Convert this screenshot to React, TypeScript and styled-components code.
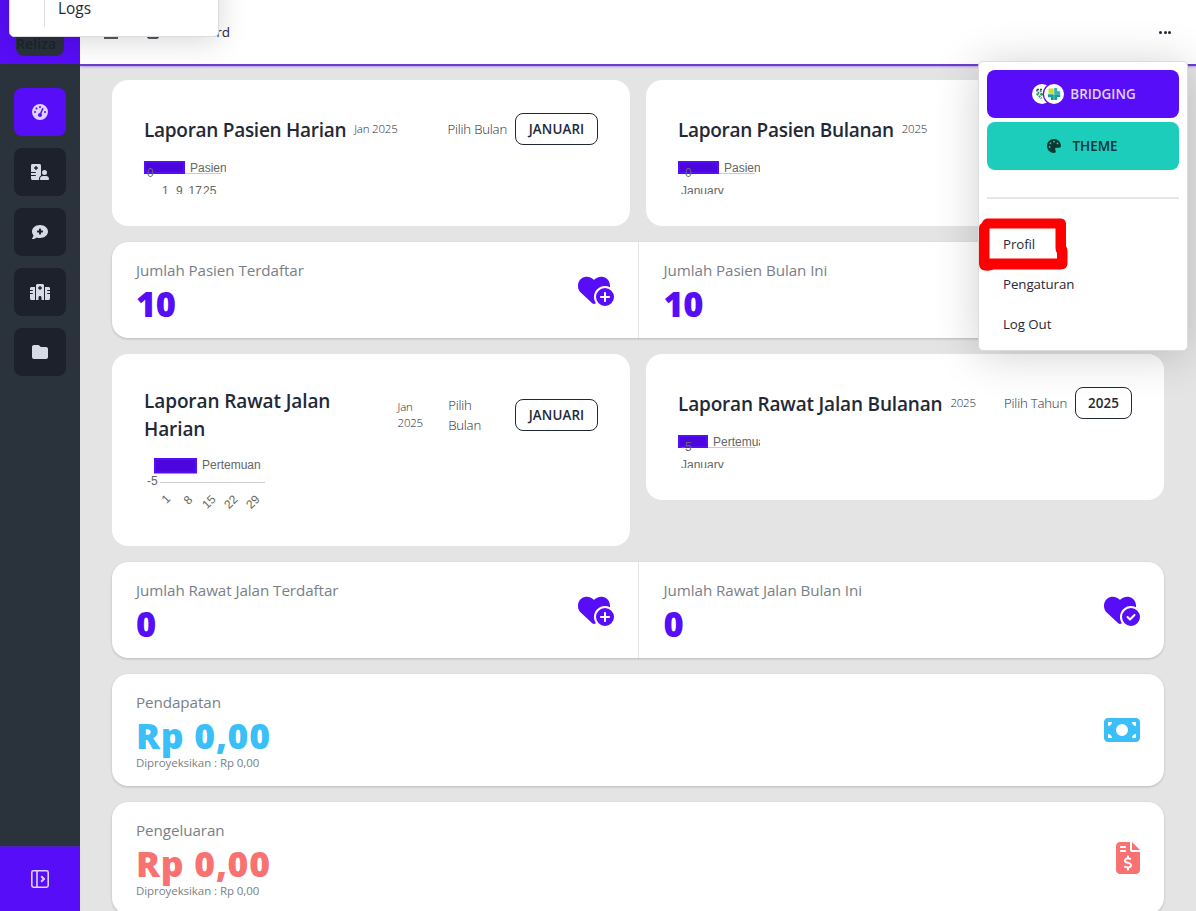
import React from "react";
import styled, { createGlobalStyle } from "styled-components";
import {
  FaGaugeHigh,
  FaHospitalUser,
  FaCommentMedical,
  FaHospital,
  FaFolder,
  FaHeartCirclePlus,
  FaHeartCircleCheck,
  FaMoneyBill,
  FaFileInvoiceDollar,
  FaPalette,
} from "react-icons/fa6";

const C = {
  primary: "#570df8",
  primaryText: "#e0d2fe",
  accent: "#1dcdbc",
  dark: "#2a323c",
  darker: "#1d212b",
  ink: "#1f2937",
  muted: "#797f87",
  info: "#3abff8",
  error: "#f87272",
  page: "#e4e4e4",
};

const Global = createGlobalStyle`
  * { box-sizing: border-box; }
  body { margin: 0; font-family: "Open Sans", "Noto Sans", sans-serif; color: ${C.ink}; background: ${C.page}; }
  button { font-family: inherit; cursor: pointer; }
`;

const Shell = styled.div`
  display: flex;
  position: relative;
  height: 911px;
  overflow: hidden;
`;

const Sidebar = styled.aside`
  width: 80px;
  flex: none;
  display: flex;
  flex-direction: column;
  background: ${C.dark};
`;

const Brand = styled.div`
  height: 64px;
  background: ${C.primary};
  padding: 8px 16px;
`;

const BrandTile = styled.div`
  height: 48px;
  border-radius: 8px;
  background: ${C.dark};
  color: #1c242d;
  font-size: 14px;
  font-weight: 600;
  line-height: 20px;
  padding-top: 26px;
  letter-spacing: 0.1px;
`;

const Nav = styled.nav`
  flex: 1;
  display: flex;
  flex-direction: column;
  align-items: center;
  gap: 12px;
  padding-top: 24px;
`;

const NavButton = styled.button<{ $active?: boolean; $icon?: number }>`
  width: 52px;
  height: 48px;
  padding: 0;
  border: 0;
  border-radius: 8px;
  display: flex;
  align-items: center;
  justify-content: center;
  background: ${(p) => (p.$active ? C.primary : C.darker)};
  color: ${(p) => (p.$active ? C.primaryText : "#d6dce6")};
  svg {
    height: 16px;
    width: ${(p) => p.$icon ?? 16}px;
  }
`;

const Expand = styled.button`
  height: 65px;
  border: 0;
  border-top: 1px solid #4a24b8;
  background: ${C.primary};
  display: flex;
  align-items: center;
  justify-content: center;
`;

const Content = styled.div`
  flex: 1;
  display: flex;
  flex-direction: column;
  min-width: 0;
`;

const Header = styled.header`
  height: 66px;
  flex: none;
  background: #fff;
  border-bottom: 2px solid #6b3ecb;
  box-shadow: 0 1px 2px rgba(87, 13, 248, 0.35);
  display: flex;
  align-items: center;
  justify-content: space-between;
  padding: 0 24px;
`;

const Crumbs = styled.div`
  display: flex;
  align-items: center;
  font-size: 13.5px;
  width: 126px;
  justify-content: space-between;
`;

const CrumbIcon = styled.svg<{ $gap?: number }>`
  flex: none;
  margin-left: ${(p) => p.$gap ?? 0}px;
`;

const CrumbText = styled.span`
  flex: 1;
  min-width: 0;
  display: flex;
  justify-content: flex-end;
`;

const Dots = styled.div`
  display: flex;
  gap: 1.5px;
  padding: 0 1px 0 0;
  i {
    width: 3px;
    height: 3px;
    border-radius: 50%;
    background: ${C.ink};
  }
`;

const Main = styled.main`
  display: flex;
  flex-direction: column;
  gap: 16px;
  padding: 14px 32px;
`;

const Pair = styled.div`
  display: grid;
  grid-template-columns: 1fr 1fr;
  gap: 16px;
  align-items: start;
`;

const Report = styled.section`
  background: #fff;
  border-radius: 16px;
  padding: 32px;
  display: flex;
  flex-direction: column;
`;

const ReportHead = styled.div<{ $tall?: boolean }>`
  height: ${(p) => (p.$tall ? 57 : 34)}px;
  display: flex;
  align-items: center;
  padding-top: ${(p) => (p.$tall ? 1 : 0)}px;
`;

const Title = styled.h2<{ $track?: number; $tall?: boolean }>`
  margin: 0;
  font-size: 19px;
  line-height: 28px;
  font-weight: 600;
  letter-spacing: ${(p) => p.$track ?? -0.1}px;
  white-space: nowrap;
  padding-top: ${(p) => (p.$tall ? 0 : 2)}px;
`;

const Period = styled.span`
  font-size: 11.5px;
  line-height: 16px;
  font-weight: 300;
  letter-spacing: -0.2px;
  margin-left: 8px;
`;

const Picker = styled.div<{ $gap?: number }>`
  margin-left: auto;
  display: flex;
  align-items: center;
  gap: ${(p) => p.$gap ?? 8}px;
`;

const PickLabel = styled.span`
  font-size: 13.2px;
  line-height: 20px;
  font-weight: 300;
  letter-spacing: -0.2px;
`;

const PickButton = styled.button<{ $w: number }>`
  width: ${(p) => p.$w}px;
  height: 32px;
  padding: 0;
  border: 1px solid ${C.ink};
  border-radius: 8px;
  background: transparent;
  color: ${C.ink};
  font-size: 13.4px;
  font-weight: 600;
  letter-spacing: 0.1px;
`;

const Plot = styled.svg`
  display: block;
  overflow: hidden;
  font-family: "Liberation Sans", Arial, sans-serif;
  font-size: 12px;
  fill: #666;
`;

const Stats = styled.section`
  display: grid;
  grid-auto-flow: column;
  grid-auto-columns: minmax(0, 1fr);
  background: #fff;
  border-radius: 16px;
  box-shadow: 0 1px 3px rgba(0, 0, 0, 0.12), 0 1px 2px rgba(0, 0, 0, 0.08);
`;

const Stat = styled.div<{ $h: number }>`
  height: ${(p) => p.$h}px;
  padding: 16px 24px;
  display: flex;
  justify-content: space-between;
  align-items: center;
  & + & {
    border-left: 1px solid #e4e5e6;
    padding-left: 24.5px;
  }
`;

const StatTitle = styled.div`
  color: ${C.muted};
  font-size: 15.2px;
  line-height: 24px;
  letter-spacing: -0.07px;
`;

const StatValue = styled.div<{ $color: string; $money?: boolean }>`
  color: ${(p) => p.$color};
  font-size: ${(p) => (p.$money ? 35.5 : 34.5)}px;
  line-height: 40px;
  height: 40px;
  padding-top: ${(p) => (p.$money ? 1 : 2)}px;
  font-weight: 800;
  letter-spacing: ${(p) => (p.$money ? 0.75 : -0.4)}px;
`;

const StatNote = styled.div`
  color: ${C.muted};
  font-size: 11.5px;
  line-height: 16px;
  height: 16px;
  padding-top: 1px;
  letter-spacing: -0.07px;
`;

const StatIcon = styled.div<{ $color: string; $w: number }>`
  display: flex;
  color: ${(p) => p.$color};
  svg {
    height: 32px;
    width: ${(p) => p.$w}px;
  }
`;

const Submenu = styled.div`
  position: absolute;
  left: 9px;
  top: -60px;
  width: 210px;
  height: 97px;
  background: #fff;
  border: 1px solid #dcdcdc;
  border-radius: 5px;
  box-shadow: 0 4px 30px rgba(0, 0, 0, 0.16);
  padding: 0 0 9px 34px;
  display: flex;
`;

const SubmenuList = styled.div`
  border-left: 1px solid #e0e0e0;
  padding: 0 0 1px 13px;
  display: flex;
  align-items: flex-end;
  font-size: 15.4px;
  line-height: 34px;
`;

const Menu = styled.div`
  position: absolute;
  left: 978px;
  top: 61px;
  width: 210px;
  height: 290px;
  padding: 8px;
  background: #fff;
  border: 1px solid #dcdcdc;
  border-radius: 5px;
  box-shadow: 0 4px 45px rgba(0, 0, 0, 0.19);
  display: flex;
  flex-direction: column;
`;

const MenuButton = styled.button<{ $bg: string; $fg: string; $gap: number }>`
  height: 48px;
  flex: none;
  border: 0;
  border-radius: 8px;
  margin-bottom: 4px;
  padding: 0 5px 0 7px;
  background: ${(p) => p.$bg};
  color: ${(p) => p.$fg};
  display: flex;
  align-items: center;
  justify-content: center;
  gap: ${(p) => p.$gap}px;
  font-size: 13.4px;
  font-weight: 600;
`;

const ThemeButton = styled(MenuButton)`
  padding: 0 7px 0 5px;
`;

const Rule = styled.div`
  height: 2px;
  flex: none;
  background: #e5e6e6;
  margin: 23px 0 25px;
`;

const MenuItem = styled.a`
  height: 40px;
  line-height: 40px;
  padding-left: 16px;
  font-size: 13.3px;
  letter-spacing: -0.08px;
`;

const Marker = styled.svg`
  position: absolute;
  left: 974px;
  top: 214px;
`;

type ReportProps = {
  title: React.ReactNode;
  track?: number;
  period: React.ReactNode;
  label: React.ReactNode;
  choice: string;
  width?: number;
  tall?: boolean;
  children: React.ReactNode;
};

const Lead = styled.div<{ $tall?: boolean }>`
  display: flex;
  align-items: center;
  justify-content: space-between;
  width: ${(p) => (p.$tall ? "279px" : "auto")};
`;

function ReportCard({ title, track, period, label, choice, width = 83, tall, children }: ReportProps) {
  return (
    <Report>
      <ReportHead $tall={tall}>
        <Lead $tall={tall}>
          <Title $track={track} $tall={tall}>{title}</Title>
          <Period>{period}</Period>
        </Lead>
        <Picker $gap={tall ? 34 : 8}>
          <PickLabel>{label}</PickLabel>
          <PickButton $w={width}>{choice}</PickButton>
        </Picker>
      </ReportHead>
      {children}
    </Report>
  );
}

function Swatch({ x = 0, w, h = 13 }: { x?: number; w: number; h?: number }) {
  return <rect x={x + 1} y={16} width={w - 2} height={h - 2} fill="#4a06dc" stroke="#570df8" strokeWidth={2} />;
}

function StatBlock(p: {
  h?: number;
  title: string;
  value: string;
  note?: string;
  color?: string;
  icon: React.ReactNode;
  iconWidth?: number;
}) {
  const color = p.color ?? C.primary;
  return (
    <Stat $h={p.h ?? 96}>
      <div>
        <StatTitle>{p.title}</StatTitle>
        <StatValue $color={color} $money={!!p.note}>{p.value}</StatValue>
        {p.note && <StatNote>{p.note}</StatNote>}
      </div>
      <StatIcon $color={color} $w={p.iconWidth ?? 36}>{p.icon}</StatIcon>
    </Stat>
  );
}

const slanted: [string, number, number][] = [
  ["1", 22, 56],
  ["8", 44, 57],
  ["15", 65, 59],
  ["22", 87, 59],
  ["29", 109, 59],
];

export default function App() {
  return (
    <>
      <Global />
      <Shell>
        <Sidebar>
          <Brand>
            <BrandTile>Reliza</BrandTile>
          </Brand>
          <Nav>
            <NavButton $active><FaGaugeHigh /></NavButton>
            <NavButton $icon={18}><FaHospitalUser /></NavButton>
            <NavButton><FaCommentMedical /></NavButton>
            <NavButton $icon={20}><FaHospital /></NavButton>
            <NavButton><FaFolder /></NavButton>
          </Nav>
          <Expand>
            <svg width="18" height="18" viewBox="0 0 18 18" fill="none" stroke={C.primaryText} strokeWidth="1.6">
              <rect x="0.8" y="0.8" width="16.4" height="16.4" rx="1.6" />
              <path d="M6 1v16" />
              <path d="M10.2 6.2L13 9l-2.8 2.8" strokeWidth="2" />
            </svg>
          </Expand>
        </Sidebar>

        <Content>
          <Header>
            <Crumbs>
              <CrumbIcon width="14" height="14" viewBox="0 0 14 14" fill="none" stroke={C.ink} strokeWidth="1.6">
                <path d="M0 1h14M0 7h14M0 13h14" />
              </CrumbIcon>
              <CrumbIcon $gap={29} width="12" height="14" viewBox="0 0 12 14" fill="none" stroke={C.ink} strokeWidth="1.4">
                <path d="M1 5.500L6 1l5 4.500V12q0 1-1 1H2q-1 0-1-1z" />
              </CrumbIcon>
              <CrumbText>Dashboard</CrumbText>
            </Crumbs>
            <Dots><i /><i /><i /></Dots>
          </Header>

          <Main>
            <Pair>
              <ReportCard title="Laporan Pasien Harian" track={-0.28} period="Jan 2025" label="Pilih Bulan" choice="JANUARI">
                <Plot width="82" height="48">
                  <path d="M41 27.5h36" stroke="#ccc" />
                  <Swatch w={41} />
                  <text x="46" y="26">Pasien</text>
                  <text x="3" y="31">0</text>
                  <text x="18" y="49">1</text>
                  <text x="32" y="49">9</text>
                  <text x="44.5" y="49">17</text>
                  <text x="59" y="49">25</text>
                </Plot>
              </ReportCard>
              <ReportCard title="Laporan Pasien Bulanan" track={-0.3} period="2025" label="Pilih Tahun" choice="2025" width={57}>
                <Plot width="82" height="48">
                  <path d="M41 27.5h36" stroke="#ccc" />
                  <Swatch w={41} />
                  <text x="46" y="26">Pasien</text>
                  <text x="7" y="31">0</text>
                  <text x="3" y="49">January</text>
                </Plot>
              </ReportCard>
            </Pair>

            <Stats>
              <StatBlock title="Jumlah Pasien Terdaftar" value="10" icon={<FaHeartCirclePlus />} />
              <StatBlock title="Jumlah Pasien Bulan Ini" value="10" icon={<FaHeartCircleCheck />} />
            </Stats>

            <Pair>
              <ReportCard
                tall
                title={<>Laporan Rawat Jalan<br />Harian</>}
                period={<>Jan<br />2025</>}
                label={<>Pilih<br />Bulan</>}
                choice="JANUARI"
              >
                <Plot width="128" height="71">
                  <path d="M16 39.5h105" stroke="#ccc" />
                  <Swatch x={10} w={43} h={15.5} />
                  <text x="58" y="26">Pertemuan</text>
                  <text x="3" y="42">-5</text>
                  {slanted.map(([t, x, y]) => (
                    <text key={t} textAnchor="middle" transform={`translate(${x} ${y}) rotate(-45)`} y="4">{t}</text>
                  ))}
                </Plot>
              </ReportCard>
              <ReportCard title="Laporan Rawat Jalan Bulanan" track={-0.18} period="2025" label="Pilih Tahun" choice="2025" width={57}>
                <Plot width="82" height="48">
                  <path d="M30 27.5h47" stroke="#ccc" />
                  <Swatch w={30} />
                  <text x="35" y="26">Pertemuan</text>
                  <text x="3" y="31">-5</text>
                  <text x="3" y="49">January</text>
                </Plot>
              </ReportCard>
            </Pair>

            <Stats>
              <StatBlock title="Jumlah Rawat Jalan Terdaftar" value="0" icon={<FaHeartCirclePlus />} />
              <StatBlock title="Jumlah Rawat Jalan Bulan Ini" value="0" icon={<FaHeartCircleCheck />} />
            </Stats>
            <Stats>
              <StatBlock h={112} title="Pendapatan" value="Rp 0,00" note="Diproyeksikan : Rp 0,00" color={C.info} icon={<FaMoneyBill />} />
            </Stats>
            <Stats>
              <StatBlock h={112} title="Pengeluaran" value="Rp 0,00" note="Diproyeksikan : Rp 0,00" color={C.error} icon={<FaFileInvoiceDollar />} iconWidth={24} />
            </Stats>
          </Main>
        </Content>

        <Submenu>
          <SubmenuList>Logs</SubmenuList>
        </Submenu>

        <Menu>
          <MenuButton $bg={C.primary} $fg={C.primaryText} $gap={6}>
            <svg width="32" height="20" viewBox="0 0 32 20">
              <circle cx="10" cy="10" r="10" fill="#fff" />
              <path d="M5 5.5h5M5 5.5v3" stroke="#3b3a7a" strokeWidth="1.6" fill="none" strokeDasharray="2 1" />
              <path d="M9.5 6.5L5 10l4.5 4.5" stroke="#2f9a5d" strokeWidth="1.8" fill="none" strokeDasharray="2 .8" />
              <circle cx="9.5" cy="10.3" r="1.5" fill="#2f9a5d" />
              <circle cx="22" cy="10" r="11.2" fill={C.primary} />
              <circle cx="22" cy="10" r="10" fill="#fff" />
              <path d="M16.5 4.5h5.300v5.300h-5.300z" fill="#cddb2a" />
              <path d="M22.200 4h3v3.300h3v2.700h-6z" fill="#2bb8a8" />
              <path d="M16 10.200h5.800V16h-2.800v-2.800H16zM22.200 10.200h6v2.800h-3V16h-3z" fill="#159f9a" />
            </svg>
            BRIDGING
          </MenuButton>
          <ThemeButton $bg={C.accent} $fg="#0b3631" $gap={12}>
            <FaPalette size={14} />
            THEME
          </ThemeButton>
          <Rule />
          <MenuItem>Profil</MenuItem>
          <MenuItem>Pengaturan</MenuItem>
          <MenuItem>Log Out</MenuItem>
        </Menu>

        <Marker width="100" height="64" viewBox="974 214 100 64">
          <path
            fill="#fe0000"
            fillRule="evenodd"
            d="M987 218.5H1061Q1066 219 1066 224V246Q1067.5 248 1067.5 252V264Q1067 269 1061 269.500H994Q990 271 985 270.500Q979.500 270 979 264V228Q979 224.500 982 223Q983 219 987 218.500ZM989.500 228.500V258.500H1057V253Q1055.500 251 1055.500 248V228.500Z"
          />
        </Marker>
      </Shell>
    </>
  );
}
